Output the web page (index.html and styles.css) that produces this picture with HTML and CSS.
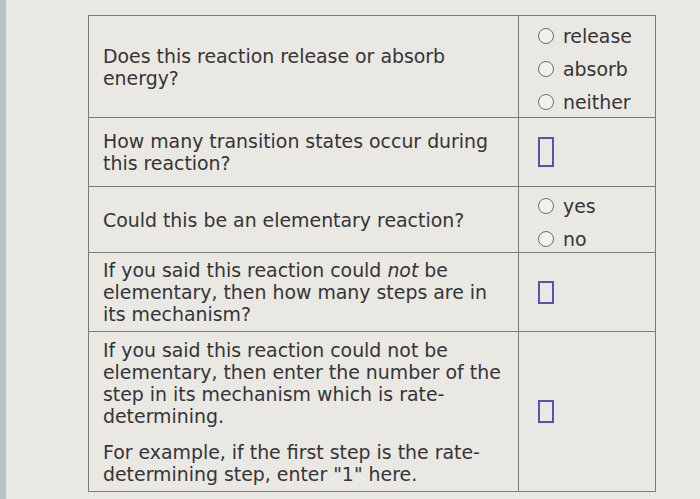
FILE: index.html
```html
<!DOCTYPE html>
<html>
<head>
<meta charset="utf-8">
<link rel="stylesheet" href="styles.css">
</head>
<body>
<div class="page">
  <div class="edge"></div>
  <div class="content">
    <table class="qtable">
      <tr class="r1">
        <td class="q">Does this reaction release or absorb energy?</td>
        <td class="a">
          <div class="opts">
            <label class="opt"><span class="radio"></span>release</label>
            <label class="opt"><span class="radio"></span>absorb</label>
            <label class="opt"><span class="radio"></span>neither</label>
          </div>
        </td>
      </tr>
      <tr class="r2">
        <td class="q">How many transition states occur during this reaction?</td>
        <td class="a"><span class="box tall"></span></td>
      </tr>
      <tr class="r3">
        <td class="q">Could this be an elementary reaction?</td>
        <td class="a">
          <div class="opts">
            <label class="opt"><span class="radio"></span>yes</label>
            <label class="opt"><span class="radio"></span>no</label>
          </div>
        </td>
      </tr>
      <tr class="r4">
        <td class="q">If you said this reaction could <em>not</em> be elementary, then how many steps are in its mechanism?</td>
        <td class="a"><span class="box"></span></td>
      </tr>
      <tr class="r5">
        <td class="q">
          <p>If you said this reaction could not be elementary, then enter the number of the step in its mechanism which is rate-determining.</p>
          <p>For example, if the first step is the rate-determining step, enter "1" here.</p>
        </td>
        <td class="a"><span class="box"></span></td>
      </tr>
    </table>
  </div>
</div>
</body>
</html>
```
FILE: styles.css
```css
html, body {
  margin: 0;
  padding: 0;
  background: #e9e8e3;
}
.page {
  display: flex;
  width: 700px;
  height: 499px;
  overflow: hidden;
  font-family: "DejaVu Sans", Verdana, sans-serif;
  color: #353436;
}
.edge {
  width: 6px;
  flex: none;
  background: #b8c3c8;
}
.content {
  flex: 1;
  padding: 15px 0 0 82px;
}
.qtable {
  border-collapse: collapse;
  width: 568px;
  table-layout: fixed;
  font-size: 18.9px;
  line-height: 22px;
}
.qtable td {
  border: 1px solid #7a7a7a;
  vertical-align: middle;
  padding: 0;
}
.q {
  width: 407px;
  padding: 0 8px 0 14px !important;
}
.a {
  padding-left: 19px !important;
}
.r1 { height: 102px; }
.r2 { height: 69px; }
.r3 { height: 66px; }
.r4 { height: 79px; }
.r5 { height: 160px; }
.r5 .q p { margin: 0; }
.r5 .q p + p { margin-top: 14px; }
.opts {
  display: flex;
  flex-direction: column;
  gap: 11px;
  padding-top: 5px;
}
.opt {
  display: flex;
  align-items: center;
  gap: 9px;
}
.radio {
  width: 14px;
  height: 14px;
  border: 1px solid #6d6d6d;
  border-radius: 50%;
  background: #f1f0ec;
  flex: none;
}
.box {
  display: block;
  width: 12px;
  height: 19px;
  border: 2px solid #5a50b4;
}
.box.tall {
  height: 26px;
}
```
